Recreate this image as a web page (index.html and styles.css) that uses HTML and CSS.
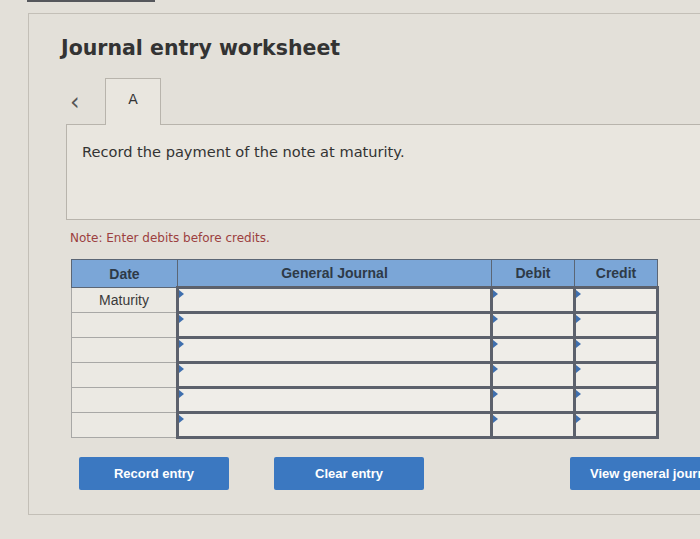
FILE: index.html
```html
<!DOCTYPE html>
<html lang="en">
<head>
    <meta charset="UTF-8">
    <meta name="viewport" content="width=device-width, initial-scale=1.0">
    <title>Journal entry worksheet</title>
    <link rel="stylesheet" href="styles.css">
</head>
<body>

    <div class="topbar"></div>

    <!-- Worksheet panel -->
    <div class="panel">
        <h1 class="title">Journal entry worksheet</h1>

        <div class="tabs">
            <span class="prev">&lsaquo;</span>
            <div class="tab">A</div>
        </div>

        <div class="question">
            <p>Record the payment of the note at maturity.</p>
        </div>

        <p class="note">Note: Enter debits before credits.</p>

        <table class="journal">
            <thead>
                <tr>
                    <th class="col-date">Date</th>
                    <th class="col-gj">General Journal</th>
                    <th class="col-amt">Debit</th>
                    <th class="col-amt">Credit</th>
                </tr>
            </thead>
            <tbody>
                <tr>
                    <td class="date">Maturity</td>
                    <td class="entry"></td>
                    <td class="entry"></td>
                    <td class="entry"></td>
                </tr>
                <tr>
                    <td class="date"></td>
                    <td class="entry"></td>
                    <td class="entry"></td>
                    <td class="entry"></td>
                </tr>
                <tr>
                    <td class="date"></td>
                    <td class="entry"></td>
                    <td class="entry"></td>
                    <td class="entry"></td>
                </tr>
                <tr>
                    <td class="date"></td>
                    <td class="entry"></td>
                    <td class="entry"></td>
                    <td class="entry"></td>
                </tr>
                <tr>
                    <td class="date"></td>
                    <td class="entry"></td>
                    <td class="entry"></td>
                    <td class="entry"></td>
                </tr>
                <tr>
                    <td class="date"></td>
                    <td class="entry"></td>
                    <td class="entry"></td>
                    <td class="entry"></td>
                </tr>
            </tbody>
        </table>

        <div class="actions">
            <button class="btn">Record entry</button>
            <button class="btn">Clear entry</button>
            <button class="btn btn-view">View general journal</button>
        </div>
    </div>

</body>
</html>
```

FILE: styles.css
```css
body {
    margin: 0;
    background-color: #e3e0d9;
    font-family: "DejaVu Sans", Verdana, sans-serif;
    color: #333;
    overflow: hidden;
    height: 539px;
}

.topbar {
    width: 128px;
    height: 2px;
    margin-left: 27px;
    background: #55575c;
}

.panel {
    margin: 11px 0 0 28px;
    width: 720px;
    height: 502px;
    border: 1px solid #c3bfb7;
    padding-left: 32px;
    box-sizing: border-box;
}

.title {
    margin: 0;
    padding-top: 22px;
    font-size: 20.5px;
    font-weight: bold;
    color: #333;
    height: 30px;
}

.tabs {
    display: flex;
    align-items: flex-end;
    margin: 12px 0 0 5px;
    height: 46px;
}

.prev {
    width: 35px;
    padding-left: 4px;
    align-self: center;
    font-size: 24px;
    color: #555;
    line-height: 20px;
    margin-top: 2px;
}

.tab {
    position: relative;
    z-index: 1;
    width: 54px;
    height: 46px;
    margin-bottom: -1px;
    border: 1px solid #b8b4ac;
    border-bottom: none;
    background: #e9e6df;
    text-align: center;
    line-height: 40px;
    font-size: 14px;
    color: #333;
}

.question {
    margin-left: 5px;
    height: 94px;
    border: 1px solid #b8b4ac;
    background: #e9e6df;
    padding: 0 15px;
}

.question p {
    margin: 18px 0 0;
    font-size: 14.6px;
    color: #333;
}

.note {
    margin: 11px 0 0 9px;
    font-size: 12px;
    color: #9c3f40;
}

.journal {
    margin: 14px 0 0 10px;
    width: 588px;
    border-collapse: collapse;
    font-family: "Liberation Sans", Arial, sans-serif;
    font-size: 14px;
}

.journal th {
    height: 26px;
    background: #7ba6d7;
    color: #2e3a48;
    font-weight: bold;
    border: 1px solid #5b6675;
    padding: 0;
}

.col-date {
    width: 105px;
}

.col-amt {
    width: 82px;
}

.journal td {
    height: 22px;
    padding: 0;
    background: #ebe9e3;
}

.journal td.date {
    border: 1px solid #a8a8a6;
    text-align: center;
    color: #3a3a3a;
}

.journal td.entry {
    position: relative;
    border: 3px solid #5c616c;
    background: #efede8;
}

.journal td.entry::before {
    content: "";
    position: absolute;
    top: 1px;
    left: 0;
    border-left: 5px solid #3f6fae;
    border-top: 4px solid transparent;
    border-bottom: 4px solid transparent;
}

.actions {
    display: flex;
    margin: 18px 0 0 18px;
}

.btn {
    flex: none;
    width: 150px;
    height: 33px;
    margin-right: 45px;
    border: none;
    border-radius: 2px;
    background: #3b78c1;
    color: white;
    font-family: "Liberation Sans", Arial, sans-serif;
    font-size: 13px;
    font-weight: bold;
    white-space: nowrap;
    cursor: pointer;
}

.btn-view {
    margin-left: 101px;
    text-align: left;
    padding-left: 20px;
}
```
